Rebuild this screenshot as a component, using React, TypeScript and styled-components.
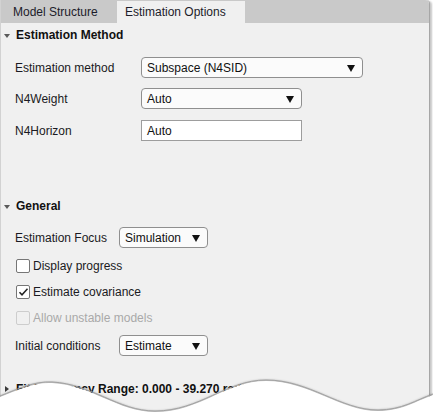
import React from "react";
import styled, { createGlobalStyle, css } from "styled-components";

const Global = createGlobalStyle`
  html, body { margin: 0; padding: 0; background: #ffffff; }
  body { font-family: "Liberation Sans", Arial, sans-serif; font-size: 12px; color: #1a1a1a; }
`;

const Page = styled.div`
  width: 433px;
  height: 418px;
  overflow: hidden;
  position: relative;
`;

const Panel = styled.div`
  width: 430px;
  height: 418px;
  box-sizing: border-box;
  background: #f0f0f0;
  border-left: 1px solid #d2d2d2;
  border-right: 1px solid #a6a6a6;
  border-top-right-radius: 4px;
  box-shadow: 2px 1px 2px rgba(0, 0, 0, 0.22);
  display: flex;
  flex-direction: column;
`;

const TabBar = styled.div`
  height: 23px;
  flex: 0 0 23px;
  background: #c9c9c9;
  border-top-right-radius: 4px;
  display: flex;
  align-items: flex-end;
`;

const Tab = styled.div<{ $active?: boolean; $w: number; $pl: number }>`
  width: ${(p) => p.$w}px;
  height: ${(p) => (p.$active ? 22 : 23)}px;
  box-sizing: border-box;
  padding-left: ${(p) => p.$pl}px;
  display: flex;
  align-items: center;
  font-size: 12px;
  color: #1c1c2a;
  ${(p) =>
    p.$active &&
    css`
      background: #f0f0f0;
      padding-bottom: 1px;
    `}
`;

const Content = styled.div`
  display: flex;
  flex-direction: column;
  padding-left: 14px;
`;

const SectionHeader = styled.div<{ $mt?: number }>`
  height: 22px;
  box-sizing: border-box;
  padding-top: 2px;
  margin-top: ${(p) => p.$mt ?? 0}px;
  margin-left: -14px;
  display: flex;
  align-items: center;
  font-weight: bold;
  font-size: 12px;
  color: #111;
  white-space: nowrap;
`;

const Caret = styled.span<{ $open: boolean }>`
  width: 15px;
  display: flex;
  padding-left: ${(p) => (p.$open ? 3 : 4)}px;
  box-sizing: border-box;
  ${(p) =>
    p.$open
      ? css`
          &::before {
            content: "";
            border-left: 3px solid transparent;
            border-right: 3px solid transparent;
            border-top: 4px solid #5a5a5a;
            margin-top: 1px;
          }
        `
      : css`
          &::before {
            content: "";
            border-top: 3px solid transparent;
            border-bottom: 3px solid transparent;
            border-left: 4px solid #3a3a3a;
          }
        `}
`;

const Row = styled.div<{ $mt: number; $label: number }>`
  display: grid;
  grid-template-columns: ${(p) => p.$label}px auto;
  align-items: center;
  margin-top: ${(p) => p.$mt}px;
  height: 21px;
  justify-content: start;
`;

const Label = styled.span`
  font-size: 12px;
  color: #1a1a22;
  white-space: nowrap;
`;

const Select = styled.div<{ $w: number }>`
  width: ${(p) => p.$w}px;
  height: 21px;
  box-sizing: border-box;
  border: 1px solid #8f8f8f;
  border-radius: 4px;
  background: #fbfbfb;
  display: flex;
  align-items: center;
  justify-content: space-between;
  padding: 0 7px 0 5px;
  font-size: 12px;
  color: #111;
`;

const Arrow = styled.span`
  width: 0;
  height: 0;
  border-left: 4.5px solid transparent;
  border-right: 4.5px solid transparent;
  border-top: 7px solid #111;
  margin-top: 1px;
`;

const TextField = styled.div<{ $w: number }>`
  width: ${(p) => p.$w}px;
  height: 21px;
  box-sizing: border-box;
  border: 1px solid #9d9d9d;
  background: #ffffff;
  display: flex;
  align-items: center;
  padding-left: 5px;
  font-size: 12px;
  color: #111;
`;

const CheckRow = styled.label<{ $mt: number; $disabled?: boolean }>`
  display: flex;
  align-items: center;
  gap: 3px;
  height: 14px;
  margin-top: ${(p) => p.$mt}px;
  font-size: 12px;
  color: ${(p) => (p.$disabled ? "#a9a9a9" : "#1a1a22")};
  margin-left: 1px;
`;

const Box = styled.span<{ $disabled?: boolean }>`
  width: 14px;
  height: 14px;
  box-sizing: border-box;
  border: 1px solid ${(p) => (p.$disabled ? "#cdcdcd" : "#767676")};
  border-radius: 2px;
  background: ${(p) => (p.$disabled ? "#f0f0f0" : "#ffffff")};
  display: flex;
  align-items: center;
  justify-content: center;
`;

const Torn = styled.svg`
  position: absolute;
  left: 0;
  bottom: 0;
  width: 433px;
  height: 42px;
  display: block;
`;

const Check = () => (
  <svg width="11" height="10" viewBox="0 0 11 10">
    <path d="M1.5 5.2 L4 7.8 L9.5 1.8" fill="none" stroke="#222" strokeWidth="1.5" />
  </svg>
);

const wave =
  "M0,20 C18,13 34,5 52,6 C92,8 118,35 155,35 C200,35 226,4 266,4 C310,4 340,34 378,34 C402,34 416,24 433,18";

export default function App() {
  return (
    <Page>
      <Global />
      <Panel>
        <TabBar>
          <Tab $w={116} $pl={12}>Model Structure</Tab>
          <Tab $active $w={128} $pl={8}>Estimation Options</Tab>
        </TabBar>
        <Content>
          <SectionHeader>
            <Caret $open />
            Estimation Method
          </SectionHeader>
          <Row $mt={12} $label={126}>
            <Label>Estimation method</Label>
            <Select $w={222}>
              Subspace (N4SID)
              <Arrow />
            </Select>
          </Row>
          <Row $mt={10} $label={126}>
            <Label>N4Weight</Label>
            <Select $w={161}>
              Auto
              <Arrow />
            </Select>
          </Row>
          <Row $mt={11} $label={126}>
            <Label>N4Horizon</Label>
            <TextField $w={161}>Auto</TextField>
          </Row>

          <SectionHeader $mt={53}>
            <Caret $open />
            General
          </SectionHeader>
          <Row $mt={11} $label={104}>
            <Label>Estimation Focus</Label>
            <Select $w={89}>
              Simulation
              <Arrow />
            </Select>
          </Row>
          <CheckRow $mt={11}>
            <Box />
            Display progress
          </CheckRow>
          <CheckRow $mt={12}>
            <Box>
              <Check />
            </Box>
            Estimate covariance
          </CheckRow>
          <CheckRow $mt={12} $disabled>
            <Box $disabled />
            Allow unstable models
          </CheckRow>
          <Row $mt={10} $label={104}>
            <Label>Initial conditions</Label>
            <Select $w={89}>
              Estimate
              <Arrow />
            </Select>
          </Row>
          <SectionHeader $mt={21}>
            <Caret $open={false} />
            Fit Frequency Range: 0.000 - 39.270 rad/s
          </SectionHeader>
        </Content>
      </Panel>
      <Torn viewBox="0 0 433 42" preserveAspectRatio="none">
        <defs>
          <filter id="sh" x="-5%" y="-50%" width="110%" height="200%">
            <feGaussianBlur stdDeviation="0.8" />
          </filter>
        </defs>
        <path d={wave} fill="none" stroke="rgba(0,0,0,0.35)" strokeWidth="2" filter="url(#sh)" transform="translate(0,1)" />
        <path d={`${wave} L433,42 L0,42 Z`} fill="#ffffff" transform="translate(0,1)" />
        <path d={wave} fill="none" stroke="#a2a2a2" strokeWidth="1" />
      </Torn>
    </Page>
  );
}
